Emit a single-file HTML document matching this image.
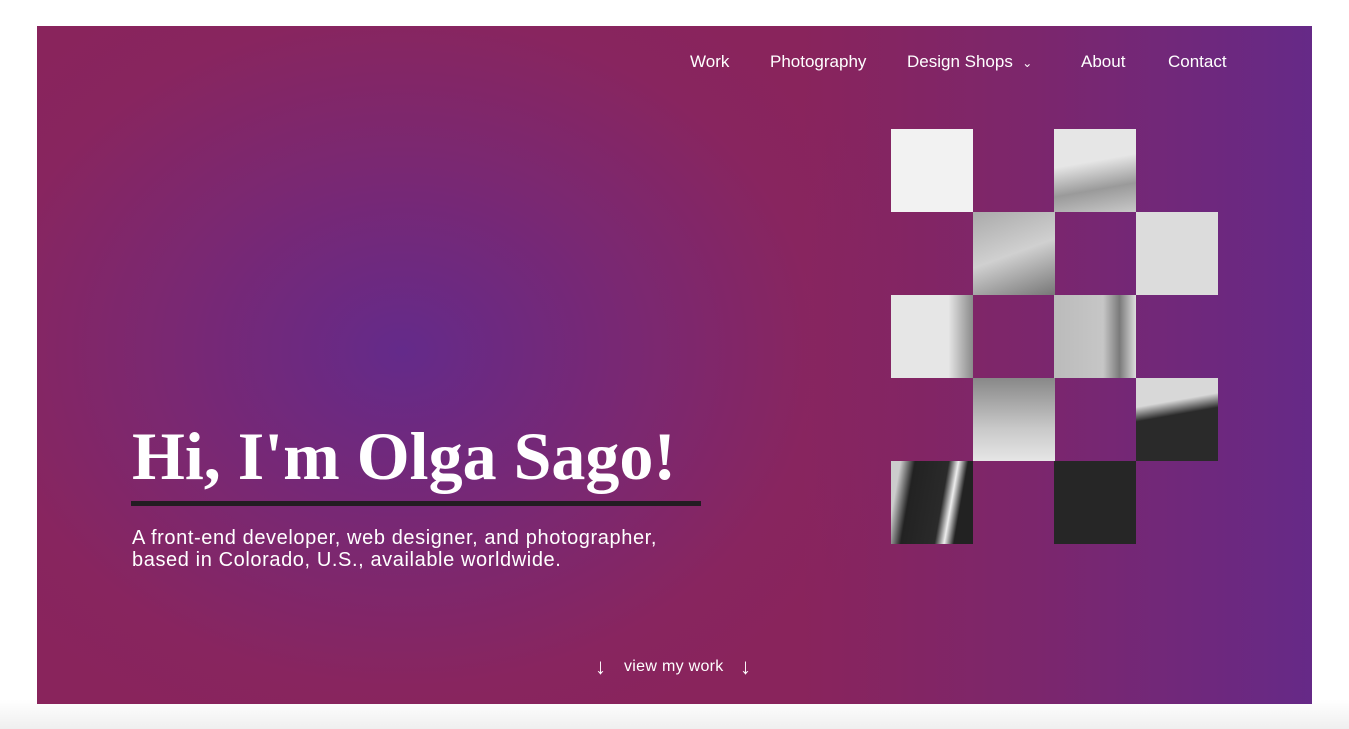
<!DOCTYPE html>
<html><head><style>
body{margin:0;width:1349px;height:729px;background:linear-gradient(#fff 0,#fff 700px,#efefef 729px);overflow:hidden;font-family:"Liberation Sans",sans-serif}
.hero{position:absolute;left:37px;top:26px;width:1275px;height:678px;overflow:hidden;
background:radial-gradient(ellipse 520px 420px at 365px 325px,#642a8a 0%,#7a2872 45%,#88255f 80%,#89245c 100%);}
.hero:after{content:"";position:absolute;inset:0;background:linear-gradient(90deg,rgba(100,42,138,0) 60%,rgba(100,42,138,.35) 78%,rgba(98,42,140,.9) 100%)}
.nav{position:absolute;top:52px;font-size:17px;color:#fff;z-index:2}
h1{position:absolute;left:132px;top:417px;margin:0;font-family:"Liberation Serif",serif;font-weight:bold;font-size:68px;color:#fff;z-index:2}
.bar{position:absolute;left:131px;top:501px;width:570px;height:5px;background:#231c22;z-index:2}
.sub{position:absolute;left:132px;top:527px;font-size:20px;line-height:22px;color:#fff;z-index:2;letter-spacing:.6px}
.c{position:absolute;width:82px;height:83px;z-index:2}
.v{position:absolute;top:658px;font-size:16px;color:#fff;z-index:2}
.a{position:absolute;top:654px;font-size:22px;color:#fff;z-index:2}
</style></head><body>
<div class="hero"></div>
<div class="nav" style="left:690px">Work</div>
<div class="nav" style="left:770px">Photography</div>
<div class="nav" style="left:907px">Design Shops &nbsp;<span style="font-size:12px">&#8964;</span></div>
<div class="nav" style="left:1081px">About</div>
<div class="nav" style="left:1168px">Contact</div>
<h1>Hi, I'm Olga Sago!</h1>
<div class="bar"></div>
<div class="sub">A front-end developer, web designer, and photographer,<br>based in Colorado, U.S., available worldwide.</div>
<div class="c" style="left:891px;top:129px;background:#f2f2f2"></div>
<div class="c" style="left:1054px;top:129px;background:linear-gradient(170deg,#e6e6e6 40%,#9a9a9a 70%,#c8c8c8)"></div>
<div class="c" style="left:973px;top:212px;background:linear-gradient(160deg,#aaa,#d0d0d0 50%,#777)"></div>
<div class="c" style="left:1136px;top:212px;background:#dcdcdc"></div>
<div class="c" style="left:891px;top:295px;background:linear-gradient(90deg,#e6e6e6 70%,#8a8a8a)"></div>
<div class="c" style="left:1054px;top:295px;background:linear-gradient(90deg,#bbb,#c6c6c6 60%,#7a7a7a 80%,#ddd)"></div>
<div class="c" style="left:973px;top:378px;background:linear-gradient(180deg,#888,#c8c8c8 60%,#e6e6e6)"></div>
<div class="c" style="left:1136px;top:378px;background:linear-gradient(170deg,#d8d8d8 30%,#2a2a2a 45%,#2a2a2a)"></div>
<div class="c" style="left:891px;top:461px;background:linear-gradient(100deg,#ccc 10%,#222 25%,#2a2a2a 60%,#eee 70%,#222 80%)"></div>
<div class="c" style="left:1054px;top:461px;background:#262626"></div>
<div class="a" style="left:595px">&#8595;</div>
<div class="v" style="left:624px;letter-spacing:.3px">view my work</div>
<div class="a" style="left:740px">&#8595;</div>
</body></html>
